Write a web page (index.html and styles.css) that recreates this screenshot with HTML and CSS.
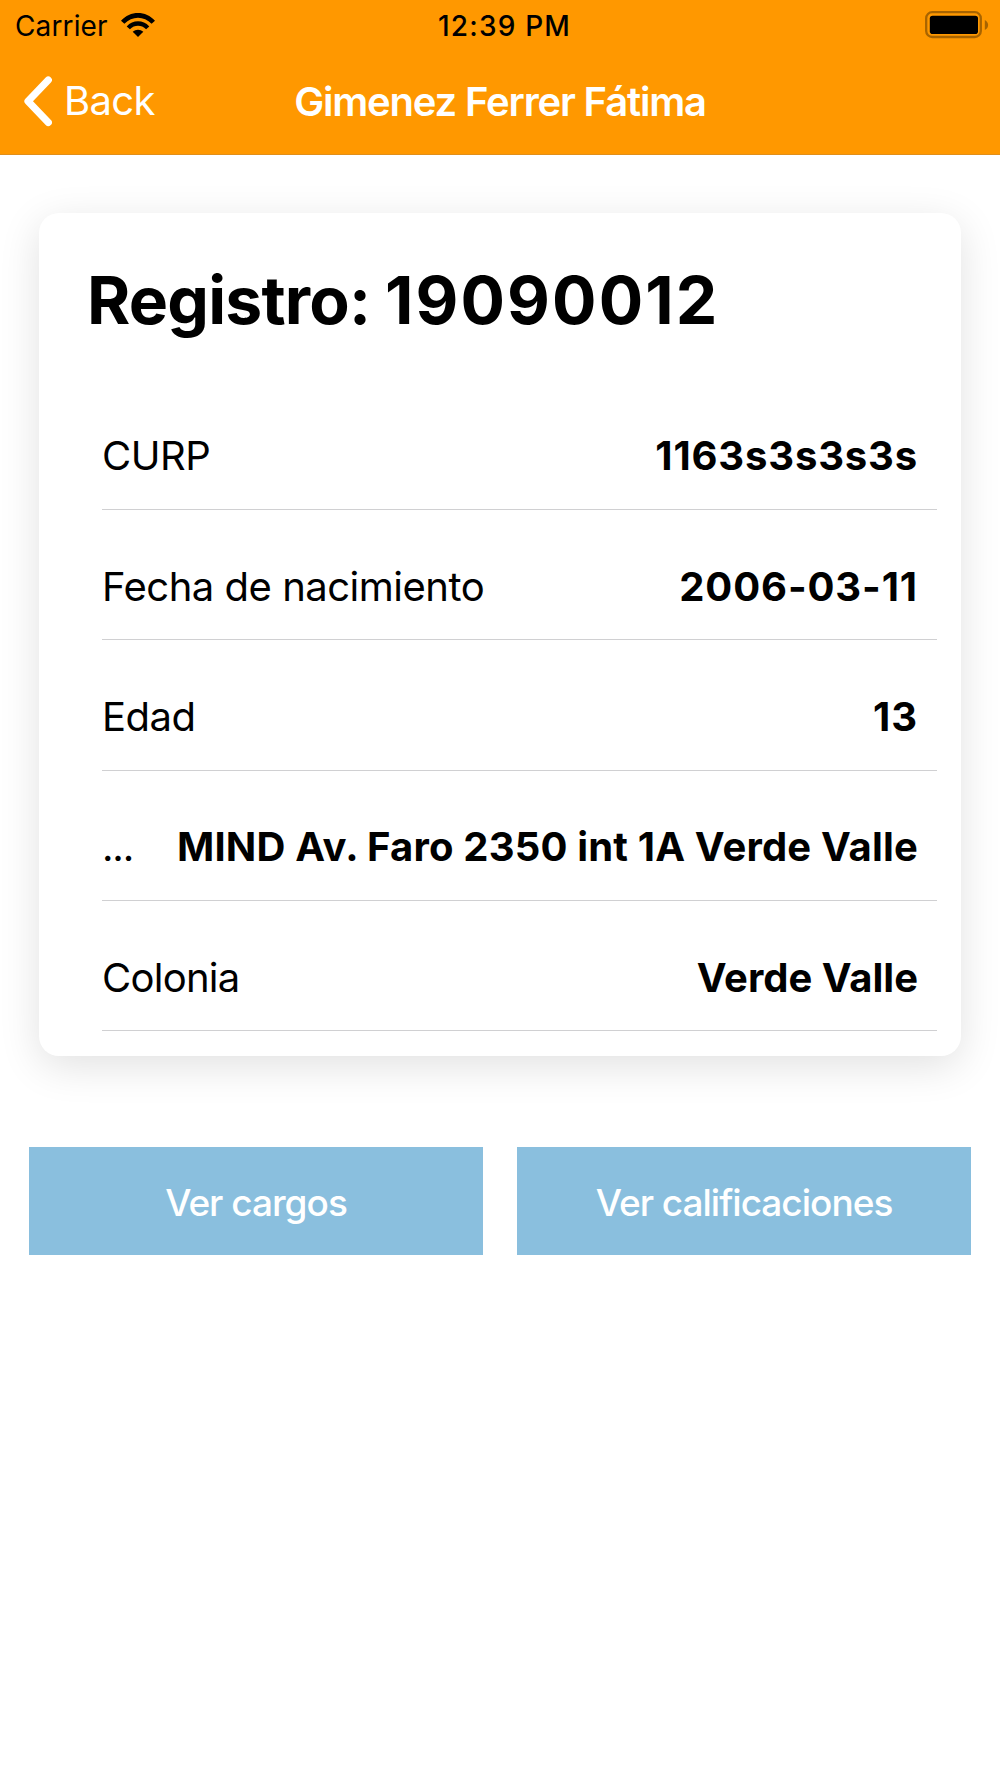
FILE: index.html
```html
<!DOCTYPE html>
<html lang="es">
<head>
    <meta charset="UTF-8">
    <meta name="viewport" content="width=device-width, initial-scale=1.0">
    <title>Gimenez Ferrer Fátima</title>
    <link rel="stylesheet" href="styles.css">
</head>
<body>
    <!-- Header -->
    <header class="header">
        <div class="status-bar">
            <div class="status-left">
                <span class="carrier">Carrier</span>
                <svg class="wifi-icon" width="34" height="24" viewBox="0 0 34 24">
                    <path d="M0 7.8C9-2.6 25-2.6 34 7.8L30.6 10.8C23 2.6 11 2.6 3.4 10.8Z"/>
                    <path d="M5.7 13.4C12 6.6 22 6.6 28.3 13.4L25.1 16.3C20.5 11.7 13.5 11.7 8.9 16.3Z"/>
                    <path d="M11.7 18.8C14.6 16.1 19.4 16.1 22.3 18.8L17 24Z"/>
                </svg>
            </div>
            <div class="status-time">12:39 PM</div>
            <div class="status-right">
                <svg width="64" height="28" viewBox="0 0 64 28">
                    <rect x="1.2" y="1.2" width="54.6" height="24.8" rx="6" fill="none" stroke="#a86400" stroke-width="2.3"/>
                    <rect x="4.8" y="4.8" width="48.2" height="18.2" rx="2.8"/>
                    <path d="M59.8 9C64.2 11 64.2 17 59.8 19Z" fill="#a86400"/>
                </svg>
            </div>
        </div>
        <div class="toolbar">
            <div class="back-button">
                <svg width="30" height="52" viewBox="0 0 30 52">
                    <path d="M26.3 5L6 26.2L26.3 47.4" fill="none" stroke="#ffffff" stroke-width="7.2" stroke-linecap="round" stroke-linejoin="round"/>
                </svg>
                <span class="back-text">Back</span>
            </div>
            <h1 class="title">Gimenez Ferrer Fátima</h1>
        </div>
    </header>

    <!-- Student card -->
    <main class="content">
        <section class="card">
            <h2 class="card-title">Registro: <span class="card-number">19090012</span></h2>
            <div class="list">
                <div class="item">
                    <span class="label">CURP</span>
                    <span class="value code">1163s3s3s3s</span>
                </div>
                <div class="item">
                    <span class="label">Fecha de nacimiento</span>
                    <span class="value date">2006-03-11</span>
                </div>
                <div class="item">
                    <span class="label">Edad</span>
                    <span class="value age">13</span>
                </div>
                <div class="item">
                    <span class="label short">...</span>
                    <span class="value address">MIND Av. Faro 2350 int 1A Verde Valle</span>
                </div>
                <div class="item">
                    <span class="label name">Colonia</span>
                    <span class="value">Verde Valle</span>
                </div>
            </div>
        </section>

        <!-- Buttons -->
        <div class="buttons">
            <button class="button">Ver cargos</button>
            <button class="button">Ver calificaciones</button>
        </div>
    </main>
</body>
</html>
```

FILE: styles.css
```css
* {
    box-sizing: border-box;
    margin: 0;
    padding: 0;
    font-family: Inter, sans-serif;
}

body {
    background-color: #ffffff;
    color: #000000;
}

.header {
    height: 155px;
    background-color: #ff9800;
    border-bottom: 1px solid #e08f1c;
}

.status-bar {
    display: grid;
    grid-template-columns: 1fr auto 1fr;
    align-items: center;
    height: 50px;
    padding: 0 11px 0 15px;
    font-size: 28px;
    line-height: 34px;
}

.status-left {
    display: flex;
    align-items: center;
    gap: 13px;
}

.carrier {
    padding-top: 2px;
    letter-spacing: 0.13px;
}

.status-time {
    padding: 2px 0 0 5px;
    font-weight: 500;
    letter-spacing: 1.2px;
}

.wifi-icon {
    margin-bottom: 1px;
}

.status-right {
    display: flex;
    justify-content: flex-end;
}

.toolbar {
    display: grid;
    grid-template-columns: 1fr auto 1fr;
    align-items: center;
    height: 102px;
    padding: 0 22px;
    color: #ffffff;
}

.back-button {
    display: flex;
    align-items: center;
    gap: 12px;
    font-size: 40px;
}

.back-text {
    padding-bottom: 1px;
    letter-spacing: -0.7px;
}

.title {
    font-size: 40px;
    font-weight: 600;
    letter-spacing: -1.17px;
}

.content {
    padding: 58px 29px 0;
}

.card {
    height: 843px;
    margin: 0 10px;
    padding: 47px 24px 0 48px;
    border-radius: 20px;
    background-color: #ffffff;
    box-shadow: 0 10px 42px rgba(0, 0, 0, 0.12);
}

.card-title {
    font-size: 66px;
    font-weight: 700;
    line-height: 80px;
    letter-spacing: -0.8px;
}

.card-number {
    letter-spacing: 2.1px;
}

.list {
    margin: 39.5px 0 0 15px;
}

.item {
    display: flex;
    justify-content: space-between;
    align-items: center;
    height: 130.4px;
    padding: 23px 19px 0 0;
    border-bottom: 1px solid #d0d0d2;
    font-size: 40px;
}

.label {
    letter-spacing: -0.5px;
}

.label.short {
    letter-spacing: -1.2px;
}

.label.name {
    letter-spacing: -0.75px;
}

.value {
    font-weight: 700;
    letter-spacing: 0;
}

.value.code {
    letter-spacing: 0.85px;
}

.value.date {
    letter-spacing: 0.9px;
}

.value.age {
    letter-spacing: 1px;
}

.value.address {
    letter-spacing: 0.17px;
}

.buttons {
    display: grid;
    grid-template-columns: 1fr 1fr;
    gap: 34px;
    margin-top: 91px;
}

.button {
    height: 108px;
    padding-top: 2px;
    border: none;
    background-color: #8abfde;
    color: #ffffff;
    font-size: 37px;
    font-weight: 500;
    letter-spacing: -1px;
}
```
